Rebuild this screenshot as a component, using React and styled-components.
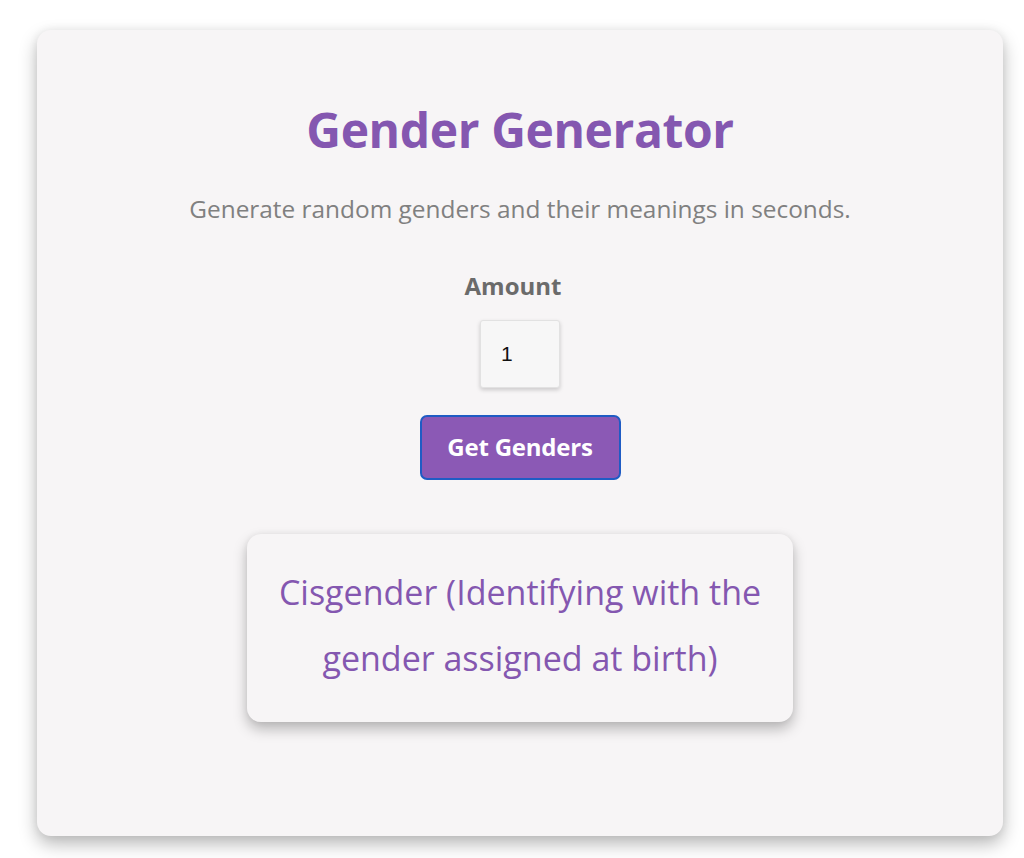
import React from "react";
import styled, { createGlobalStyle } from "styled-components";

const Global = createGlobalStyle`
  html, body { margin: 0; padding: 0; background: #ffffff; }
  body { font-family: "Open Sans", "Noto Sans", sans-serif; }
`;

const Page = styled.div`
  padding: 30px 21px 22px 37px;
`;

const Card = styled.main`
  background: #f7f5f6;
  border-radius: 14px;
  box-shadow: 0 8px 18px rgba(0,0,0,0.28), 0 0 10px rgba(0,0,0,0.06);
  height: 806px;
  box-sizing: border-box;
  display: flex;
  flex-direction: column;
  align-items: center;
  padding-top: 68px;
`;

const Title = styled.h1`
  margin: 0;
  font-size: 48px;
  font-weight: 700;
  color: #8457b0;
  line-height: 64px;
  letter-spacing: -0.4px;
`;

const Subtitle = styled.p`
  margin: 31px 0 0;
  font-size: 24.4px;
  color: #808080;
  line-height: 32px;
`;

const Label = styled.label`
  margin-top: 45px;
  padding-right: 14px;
  font-size: 24px;
  font-weight: 700;
  color: #6b6b6b;
  line-height: 32px;
`;

const NumberInput = styled.input`
  margin-top: 18px;
  width: 80px;
  height: 68px;
  box-sizing: border-box;
  border: 1px solid #e2e2e2;
  border-radius: 3px;
  background: #f7f7f7;
  box-shadow: 0 2px 4px rgba(0,0,0,0.18);
  padding: 0 20px;
  font-family: "Liberation Sans", Arial, sans-serif;
  font-size: 21px;
  color: #111;
  outline: none;
  appearance: textfield;
  &::-webkit-inner-spin-button { appearance: none; margin: 0; }
`;

const Button = styled.button`
  margin-top: 27px;
  width: 201px;
  height: 65px;
  border: 2px solid #1f5cc4;
  border-radius: 7px;
  background: #8b59b5;
  color: #ffffff;
  font-family: "Open Sans", sans-serif;
  font-size: 24px;
  font-weight: 700;
  letter-spacing: -0.2px;
  line-height: 1;
  padding-bottom: 3px;
  cursor: pointer;
`;

const Result = styled.section`
  margin-top: 54px;
  width: 546px;
  height: 188px;
  box-sizing: border-box;
  border-radius: 14px;
  background: #f7f5f6;
  box-shadow: 0 7px 14px rgba(0,0,0,0.26), 0 0 6px rgba(0,0,0,0.06);
  display: flex;
  align-items: center;
  justify-content: center;
  padding: 0 16px;
`;

const ResultText = styled.p`
  margin: 0;
  text-align: center;
  color: #8457b0;
  font-size: 34px;
  line-height: 66px;
  margin-top: -6px;
`;

export default function App() {
  return (
    <Page>
      <Global />
      <Card>
        <Title>Gender Generator</Title>
        <Subtitle>Generate random genders and their meanings in seconds.</Subtitle>
        <Label htmlFor="amount">Amount</Label>
        <NumberInput id="amount" type="number" defaultValue={1} />
        <Button>Get Genders</Button>
        <Result>
          <ResultText>
            Cisgender (Identifying with the
            <br />
            gender assigned at birth)
          </ResultText>
        </Result>
      </Card>
    </Page>
  );
}
